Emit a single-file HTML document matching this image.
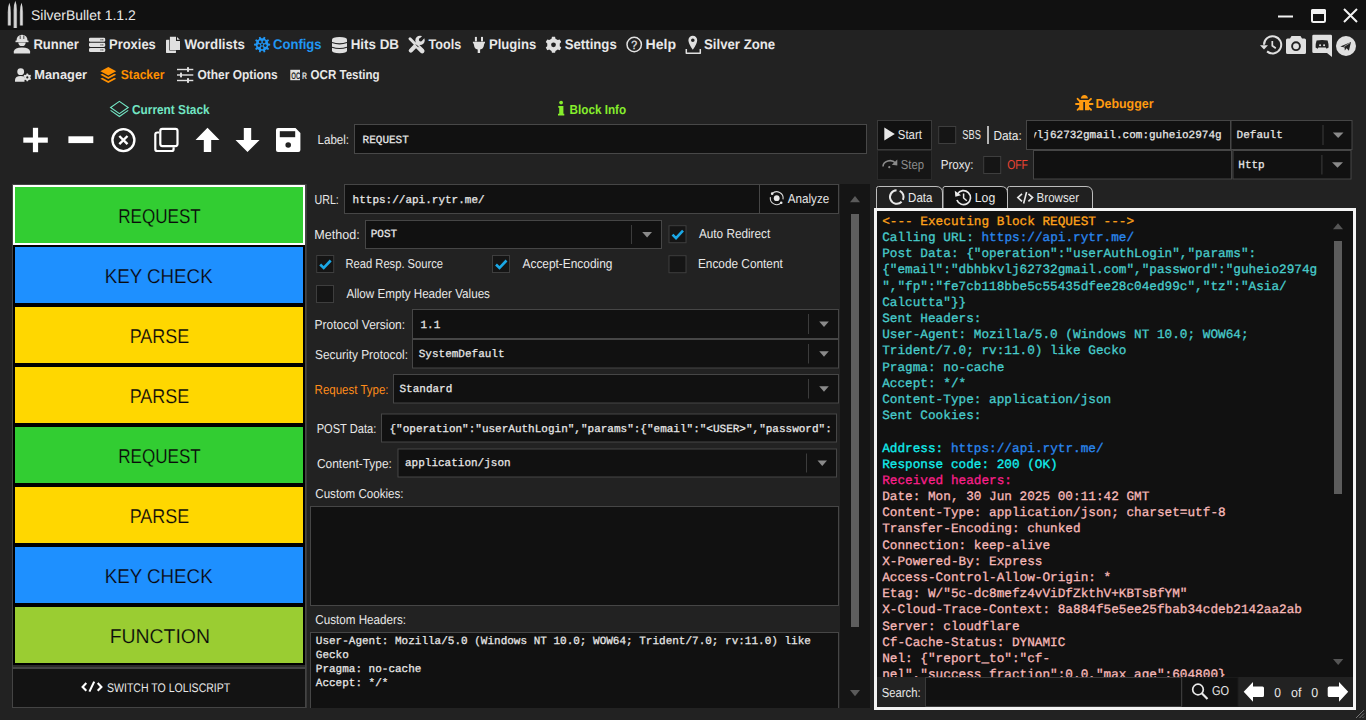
<!DOCTYPE html>
<html><head><meta charset="utf-8"><title>SilverBullet</title>
<style>
html,body{margin:0;padding:0;width:1366px;height:720px;overflow:hidden;background:#222}
svg{position:absolute;left:0;top:0;display:block}
text{text-rendering:geometricPrecision}
</style></head><body>
<svg width="1366" height="720" viewBox="0 0 1366 720">
<rect x="0" y="0" width="1366" height="720" fill="#222222" rx="0" />
<rect x="0" y="0" width="1366" height="30" fill="#111111" rx="0" />
<defs><linearGradient id="bul" x1="0" x2="1" y1="0" y2="0"><stop offset="0" stop-color="#9a9a9a"/><stop offset="0.45" stop-color="#e6e6e6"/><stop offset="1" stop-color="#8a8a8a"/></linearGradient></defs>
<path d="M7.7,25.4 L7.7,12.2 Q7.7,6.7 9.35,2.7 Q11,6.7 11,12.2 L11,25.4 Z" fill="url(#bul)"/>
<path d="M13.5,27.9 L13.5,10.3 Q13.5,4.8 15.3,0.8 Q17.1,4.8 17.1,10.3 L17.1,27.9 Z" fill="url(#bul)"/>
<path d="M19.8,25.4 L19.8,12.2 Q19.8,6.7 21.450000000000003,2.7 Q23.1,6.7 23.1,12.2 L23.1,25.4 Z" fill="url(#bul)"/>
<rect x="1278" y="15.5" width="15" height="2" fill="#f2f2f2" rx="0" />
<rect x="1312" y="10" width="13" height="12" rx="1.5" fill="none" stroke="#f2f2f2" stroke-width="2"/>
<rect x="1311" y="9" width="15" height="5" fill="#f2f2f2" rx="1.5" />
<path d="M1344,9 L1357,22 M1357,9 L1344,22" stroke="#f2f2f2" stroke-width="2" fill="none"/>
<path d="M16.5,41 Q16.5,35 22,34.8 Q27.5,35 27.5,41 Z" fill="#e0e0e0"/>
<rect x="15.5" y="40.6" width="13" height="1.6" fill="#e0e0e0"/>
<path d="M18.3,42.4 Q18.5,46 22,46 Q25.5,46 25.7,42.4 Z" fill="#e0e0e0"/>
<path d="M13.8,53.4 L13.8,51.5 Q14.5,47.6 22,47.6 Q29.5,47.6 30.1,51.5 L30.1,53.4 Z" fill="#e0e0e0"/>
<path d="M20.2,35.5 V39 M23.8,35.5 V39" stroke="#222" stroke-width="0.8"/>
<rect x="89" y="37.7" width="16.2" height="4.1" rx="1.3" fill="#e0e0e0"/>
<rect x="100.5" y="39.0" width="1" height="1.5" fill="#555"/><rect x="102.3" y="39.0" width="1" height="1.5" fill="#555"/>
<rect x="89" y="42.8" width="16.2" height="4.1" rx="1.3" fill="#e0e0e0"/>
<rect x="100.5" y="44.099999999999994" width="1" height="1.5" fill="#555"/><rect x="102.3" y="44.099999999999994" width="1" height="1.5" fill="#555"/>
<rect x="89" y="47.9" width="16.2" height="4.1" rx="1.3" fill="#e0e0e0"/>
<rect x="100.5" y="49.199999999999996" width="1" height="1.5" fill="#555"/><rect x="102.3" y="49.199999999999996" width="1" height="1.5" fill="#555"/>
<rect x="166" y="39.8" width="10" height="13.1" rx="0.6" fill="#e0e0e0"/>
<path d="M169.3,36.1 H176.6 L180.6,40.1 V50.5 H169.3 Z" fill="#222"/>
<path d="M169.9,36.7 H176 V41 H180 V49.9 H169.9 Z" fill="#e0e0e0"/>
<path d="M177,36.9 L179.8,39.8 H177 Z" fill="#e0e0e0"/>
<path d="M268.30,43.50 L270.16,43.82 L270.16,45.38 L268.30,45.70 L267.77,47.35 L269.08,48.71 L268.16,49.97 L266.47,49.14 L265.07,50.16 L265.34,52.03 L263.85,52.51 L262.97,50.84 L261.23,50.84 L260.35,52.51 L258.86,52.03 L259.13,50.16 L257.73,49.14 L256.04,49.97 L255.12,48.71 L256.43,47.35 L255.90,45.70 L254.04,45.38 L254.04,43.82 L255.90,43.50 L256.43,41.85 L255.12,40.49 L256.04,39.23 L257.73,40.06 L259.13,39.04 L258.86,37.17 L260.35,36.69 L261.23,38.36 L262.97,38.36 L263.85,36.69 L265.34,37.17 L265.07,39.04 L266.47,40.06 L268.16,39.23 L269.08,40.49 L267.77,41.85 Z" fill="#2196f3"/>
<circle cx="262.1" cy="44.6" r="4.8" fill="none" stroke="#1d1d1d" stroke-width="0"/>
<circle cx="264.04" cy="41.93" r="1.35" fill="#222"/>
<circle cx="265.24" cy="45.62" r="1.35" fill="#222"/>
<circle cx="262.10" cy="47.90" r="1.35" fill="#222"/>
<circle cx="258.96" cy="45.62" r="1.35" fill="#222"/>
<circle cx="260.16" cy="41.93" r="1.35" fill="#222"/>
<circle cx="262.1" cy="44.6" r="1.1" fill="#222"/>
<path d="M332,39.5 Q332,36.9 339.5,36.9 Q347,36.9 347,39.5 V50.6 Q347,53.2 339.5,53.2 Q332,53.2 332,50.6 Z" fill="#e0e0e0"/>
<path d="M332,42.6 Q339.5,45.2 347,42.6 M332,47.2 Q339.5,49.8 347,47.2" stroke="#222" stroke-width="1.1" fill="none"/>
<path d="M410,38.8 L416.2,45" stroke="#e0e0e0" stroke-width="3" stroke-linecap="round"/>
<path d="M417,45.8 L422.2,51" stroke="#e0e0e0" stroke-width="4.6" stroke-linecap="round"/>
<path d="M410.8,50.6 L417.5,43.8" stroke="#e0e0e0" stroke-width="4.2" stroke-linecap="round"/>
<circle cx="420" cy="40.4" r="4.7" fill="#e0e0e0"/>
<path d="M420.3,40.1 L425.5,34.9" stroke="#222" stroke-width="3.2"/><circle cx="420.6" cy="39.8" r="1.7" fill="#222"/>
<path d="M416,44.6 L418.6,47.2" stroke="#222" stroke-width="1"/>
<rect x="474.9" y="36.9" width="2" height="4.5" fill="#e0e0e0"/><rect x="481" y="36.9" width="2" height="4.5" fill="#e0e0e0"/>
<path d="M472.9,41.7 H485 V43 Q484,43.5 484,45 Q483.5,49 480.1,49.5 V52.9 H477.7 V49.5 Q474.3,49 474,45 Q474,43.5 472.9,43 Z" fill="#e0e0e0"/>
<path d="M559.76,46.13 L561.24,47.50 L559.71,50.16 L557.78,49.56 L555.48,50.89 L555.04,52.85 L551.96,52.85 L551.52,50.89 L549.22,49.56 L547.29,50.16 L545.76,47.50 L547.24,46.13 L547.24,43.47 L545.76,42.10 L547.29,39.44 L549.22,40.04 L551.52,38.71 L551.96,36.75 L555.04,36.75 L555.48,38.71 L557.78,40.04 L559.71,39.44 L561.24,42.10 L559.76,43.47 Z M555.9,44.8 A2.4,2.4 0 1,0 551.1,44.8 A2.4,2.4 0 1,0 555.9,44.8 Z" fill="#e0e0e0" fill-rule="evenodd"/>
<circle cx="634.2" cy="44.5" r="7.2" fill="none" stroke="#e0e0e0" stroke-width="1.5"/>
<path d="M692.8,49.8 Q688.4,43.6 688.4,40.2 A4.4,4.4 0 0,1 697.2,40.2 Q697.2,43.6 692.8,49.8 Z M694.6,40.3 A1.8,1.8 0 1,0 691,40.3 A1.8,1.8 0 1,0 694.6,40.3 Z" fill="#e0e0e0" fill-rule="evenodd"/>
<path d="M686.3,49 V53.3 H700.3 V49" fill="none" stroke="#e0e0e0" stroke-width="1.5" stroke-linejoin="round"/>
<path d="M1264.00,44.80 A8.6,8.6 0 1,1 1267.07,51.39" fill="none" stroke="#e0e0e0" stroke-width="2"/>
<path d="M1260,45.2 L1268,45.2 L1264,49.4 Z" fill="#e0e0e0"/>
<path d="M1272.3,41 V45.7 L1275.8,48.3" fill="none" stroke="#e0e0e0" stroke-width="1.7"/>
<path d="M1286,40 Q1286,38.5 1287.5,38.5 H1290 L1291.5,36 H1300.5 L1302,38.5 H1304.5 Q1306,38.5 1306,40 V52.5 Q1306,54 1304.5,54 H1287.5 Q1286,54 1286,52.5 Z" fill="#e0e0e0"/>
<circle cx="1296" cy="46.2" r="3.9" fill="none" stroke="#222" stroke-width="1.9"/>
<path d="M1312.3,36 Q1312.3,34.7 1313.6,34.7 H1330.7 Q1332,34.7 1332,36 V57 L1327,53 H1313.6 Q1312.3,53 1312.3,51.7 Z" fill="#e0e0e0"/>
<path d="M1316.6,40.6 Q1322.1,39.6 1327.6,40.6 Q1328.8,44 1328.6,47.6 L1326.6,48.8 L1325.8,47.4 H1318.4 L1317.6,48.8 L1315.6,47.6 Q1315.4,44 1316.6,40.6 Z" fill="#222"/>
<circle cx="1320.1" cy="45.3" r="1.05" fill="#e0e0e0"/><circle cx="1324.1" cy="45.3" r="1.05" fill="#e0e0e0"/>
<circle cx="1346" cy="46" r="10" fill="#e0e0e0"/>
<path d="M1340.3,46.4 L1351,42 L1348.9,50.7 L1346.6,48.2 L1344.8,50.4 L1344.6,47.4 Z" fill="#222"/>
<path d="M1343.6,46.9 L1350,42.8" stroke="#e0e0e0" stroke-width="0.6"/>
<circle cx="20.7" cy="71.7" r="3.4" fill="#e0e0e0"/>
<path d="M15,81.8 V80 Q15.2,76 20.7,76 Q23,76 24.5,76.6 L24.5,81.8 Z" fill="#e0e0e0"/>
<path d="M30.33,78.04 L31.08,78.72 L30.33,80.01 L29.37,79.70 L28.26,80.35 L28.05,81.33 L26.55,81.33 L26.34,80.35 L25.23,79.70 L24.27,80.01 L23.52,78.72 L24.27,78.04 L24.27,76.76 L23.52,76.08 L24.27,74.79 L25.23,75.10 L26.34,74.45 L26.55,73.47 L28.05,73.47 L28.26,74.45 L29.37,75.10 L30.33,74.79 L31.08,76.08 L30.33,76.76 Z M28.400000000000002,77.4 A1.1,1.1 0 1,0 26.2,77.4 A1.1,1.1 0 1,0 28.400000000000002,77.4 Z" fill="#e0e0e0" fill-rule="evenodd"/>
<path d="M108.3,67 L116.2,71.2 L108.3,75.4 L100.4,71.2 Z" fill="#ff9000"/>
<path d="M100.4,74.8 L102.3,73.8 L108.3,77 L114.3,73.8 L116.2,74.8 L108.3,79 Z" fill="#ff9000"/>
<path d="M100.4,78.8 L102.3,77.8 L108.3,81 L114.3,77.8 L116.2,78.8 L108.3,83 Z" fill="#ff9000"/>
<rect x="177" y="68.8" width="16.3" height="1.4" fill="#e0e0e0"/>
<rect x="187" y="67.0" width="2" height="5" rx="0.8" fill="#e0e0e0"/>
<rect x="177" y="74.3" width="16.3" height="1.4" fill="#e0e0e0"/>
<rect x="180" y="72.5" width="2" height="5" rx="0.8" fill="#e0e0e0"/>
<rect x="177" y="79.8" width="16.3" height="1.4" fill="#e0e0e0"/>
<rect x="187" y="78.0" width="2" height="5" rx="0.8" fill="#e0e0e0"/>
<rect x="290.3" y="69.8" width="9.7" height="10.4" fill="#e0e0e0"/>
<path d="M119.4,101.4 L128.2,107.5 L119.4,113.6 L110.6,107.5 Z" fill="none" stroke="#72e6c4" stroke-width="1.15"/>
<path d="M110.6,110.4 L119.4,116.5 L128.2,110.4" fill="none" stroke="#72e6c4" stroke-width="1.15"/>
<circle cx="561.1" cy="102.6" r="1.9" fill="#86ee2c"/>
<path d="M558.3,106 H563.4 V113.8 H564.3 V115.6 H558 V113.8 H559.2 V107.7 H558.3 Z" fill="#86ee2c"/>
<path d="M1080.9,98.6 Q1081.2,94.9 1084.4,94.9 Q1087.6,94.9 1087.9,98.6 Z" fill="#ff9a10"/>
<path d="M1079.2,100.1 H1089.1 V110.3 H1085 V102 H1083.3 V110.3 H1079.2 Z" fill="#ff9a10"/>
<path d="M1077.6,98.8 L1080,101.4 M1091,98.8 L1088.4,101.4 M1076,104 H1079.6 M1092.6,104 H1089 M1077.6,109.8 L1080,107.4 M1091,109.8 L1088.4,107.4" stroke="#ff9a10" stroke-width="1.9" fill="none" stroke-linecap="round"/>
<rect x="23.3" y="137.5" width="24.5" height="5.2" fill="#ffffff"/><rect x="32.9" y="127.8" width="5.2" height="24.4" fill="#ffffff"/>
<rect x="68.4" y="136.3" width="24.9" height="6.8" fill="#ffffff"/>
<circle cx="123.4" cy="140.1" r="11" fill="none" stroke="#ffffff" stroke-width="2.4"/>
<path d="M119.3,136 L127.5,144.2 M127.5,136 L119.3,144.2" stroke="#ffffff" stroke-width="2.4"/>
<rect x="160.3" y="128.9" width="17.2" height="17.2" rx="2" fill="none" stroke="#ffffff" stroke-width="2.2"/>
<path d="M159,132.5 H157.4 Q155.3,132.5 155.3,134.6 V148.9 Q155.3,151 157.4,151 H171.5 Q173.6,151 173.6,148.9 V147.2" fill="none" stroke="#ffffff" stroke-width="2.2"/>
<path d="M207.5,127.8 L219.5,140 H211.2 V152 H203.8 V140 H195.5 Z" fill="#ffffff"/>
<path d="M247.5,152 L259.6,140 H251.2 V128 H243.8 V140 H235.5 Z" fill="#ffffff"/>
<path d="M276,130 Q276,128 278,128 H295.5 L300.4,133 V150 Q300.4,152 298.4,152 H278 Q276,152 276,150 Z" fill="#ffffff"/>
<rect x="279.8" y="131.2" width="15.4" height="6" fill="#222"/>
<circle cx="288.2" cy="145" r="2.8" fill="#222"/>
<rect x="354.5" y="124.5" width="512" height="29" fill="#111111" stroke="#484848" stroke-width="1" rx="0" />
<rect x="12.5" y="184.5" width="293" height="483" fill="#2a2a2a" stroke="#444" stroke-width="1"/>
<rect x="13" y="185" width="292" height="60" fill="#ffffff" rx="0" />
<rect x="15" y="187" width="288" height="56" fill="#32cd32" rx="0" />
<rect x="13" y="245" width="292" height="60" fill="#000000" rx="0" />
<rect x="15" y="247" width="288" height="56" fill="#1e90ff" rx="0" />
<rect x="13" y="305" width="292" height="60" fill="#000000" rx="0" />
<rect x="15" y="307" width="288" height="56" fill="#ffd700" rx="0" />
<rect x="13" y="365" width="292" height="60" fill="#000000" rx="0" />
<rect x="15" y="367" width="288" height="56" fill="#ffd700" rx="0" />
<rect x="13" y="425" width="292" height="60" fill="#000000" rx="0" />
<rect x="15" y="427" width="288" height="56" fill="#32cd32" rx="0" />
<rect x="13" y="485" width="292" height="60" fill="#000000" rx="0" />
<rect x="15" y="487" width="288" height="56" fill="#ffd700" rx="0" />
<rect x="13" y="545" width="292" height="60" fill="#000000" rx="0" />
<rect x="15" y="547" width="288" height="56" fill="#1e90ff" rx="0" />
<rect x="13" y="605" width="292" height="60" fill="#000000" rx="0" />
<rect x="15" y="607" width="288" height="56" fill="#9acd32" rx="0" />
<rect x="12.5" y="668.5" width="293" height="39" fill="#131313" stroke="#444" stroke-width="1"/>
<path d="M86.3,683.1 L82.6,686.9 L86.3,690.7 M97.7,683.1 L101.4,686.9 L97.7,690.7 M94.2,681.6 L89.4,691.6" stroke="#ffffff" stroke-width="2.1" fill="none"/>
<rect x="306" y="184" width="1" height="524" fill="#3a3a3a"/>
<rect x="840" y="184" width="30" height="524" fill="#151515" rx="0" />
<path d="M850,202.2 H860 L855,196 Z" fill="#5a5a5a"/>
<rect x="851" y="214" width="8" height="413" fill="#5e5e5e" rx="0" />
<path d="M850,690 H860 L855,696.2 Z" fill="#5a5a5a"/>
<rect x="344.5" y="184.5" width="415" height="29" fill="#111111" stroke="#464646" stroke-width="1"/>
<rect x="759.5" y="184.5" width="79" height="29" fill="#111111" stroke="#464646" stroke-width="1"/>
<path d="M772.17,193.67 A6.4,6.4 0 0,1 783.00,199.31 M781.23,202.73 A6.4,6.4 0 0,1 770.40,197.09" fill="none" stroke="#d8d8d8" stroke-width="1.1"/>
<circle cx="772.17" cy="193.67" r="1.3" fill="#e8e8e8"/><circle cx="781.23" cy="202.73" r="1.3" fill="#e8e8e8"/>
<circle cx="776.7" cy="198.2" r="2.9" fill="#e8e8e8"/>
<rect x="365.5" y="220.5" width="296" height="28" fill="#111111" stroke="#464646" stroke-width="1"/>
<rect x="631" y="225" width="1" height="19" fill="#3c3c3c"/>
<path d="M642.2,231.9 H652 L647.1,237.5 Z" fill="#8a8a8a"/>
<rect x="669.0" y="225.7" width="17" height="17" fill="#151515" stroke="#3e3e3e" stroke-width="1"/>
<path d="M672.5,234.7 L676.0,238.2 L683.0,230.7" stroke="#1ba8e6" stroke-width="2.6" fill="none"/>
<rect x="316.7" y="255.5" width="17" height="17" fill="#151515" stroke="#3e3e3e" stroke-width="1"/>
<path d="M320.2,264.5 L323.7,268 L330.7,260.5" stroke="#1ba8e6" stroke-width="2.6" fill="none"/>
<rect x="492.5" y="255.5" width="17" height="17" fill="#151515" stroke="#3e3e3e" stroke-width="1"/>
<path d="M496,264.5 L499.5,268 L506.5,260.5" stroke="#1ba8e6" stroke-width="2.6" fill="none"/>
<rect x="669.0" y="255.7" width="17" height="17" fill="#151515" stroke="#3e3e3e" stroke-width="1"/>
<rect x="316.5" y="285.5" width="17" height="17" fill="#151515" stroke="#3e3e3e" stroke-width="1"/>
<rect x="412.5" y="309.5" width="426" height="29" fill="#111111" stroke="#464646" stroke-width="1"/>
<rect x="808" y="314" width="1" height="20" fill="#3c3c3c"/>
<path d="M819.2,321.4 H828.8 L824.0,327.0 Z" fill="#8a8a8a"/>
<rect x="412.5" y="339.5" width="426" height="28.5" fill="#111111" stroke="#464646" stroke-width="1"/>
<rect x="808" y="344" width="1" height="19.5" fill="#3c3c3c"/>
<path d="M819.2,351.15 H828.8 L824.0,356.75 Z" fill="#8a8a8a"/>
<rect x="393.5" y="374.5" width="445" height="28.5" fill="#111111" stroke="#464646" stroke-width="1"/>
<rect x="808" y="379" width="1" height="19.5" fill="#3c3c3c"/>
<path d="M819.2,386.15 H828.8 L824.0,391.75 Z" fill="#8a8a8a"/>
<rect x="381.5" y="414.0" width="455" height="28.0" fill="#111111" stroke="#464646" stroke-width="1"/>
<clipPath id="cpd"><rect x="382" y="414" width="449.5" height="28"/></clipPath>
<g clip-path="url(#cpd)"><text x="389.5" y="432" font-family="Liberation Mono" font-size="11" fill="#e8e8e8" stroke="#e8e8e8" stroke-width="0.25" xml:space="preserve">{"operation":"userAuthLogin","params":{"email":"&lt;USER&gt;","password":"&lt;PASS&gt;"}}</text></g>
<rect x="398.0" y="449.0" width="438.5" height="28.0" fill="#111111" stroke="#464646" stroke-width="1"/>
<rect x="806" y="453.5" width="1" height="19.0" fill="#3c3c3c"/>
<path d="M817.5,460.4 H827 L822.25,466.0 Z" fill="#8a8a8a"/>
<rect x="310.5" y="506.5" width="528" height="99" fill="#111111" stroke="#464646" stroke-width="1"/>
<rect x="310.5" y="632.5" width="528" height="87" fill="#111111" stroke="#464646" stroke-width="1"/>
<rect x="877.5" y="120.5" width="54" height="29" fill="#111111" stroke="#3a3a3a" stroke-width="1"/>
<path d="M884.3,127.4 L894.8,134 L884.3,140.5 Z" fill="#e8e8e8"/>
<rect x="877.5" y="150.5" width="54" height="29" fill="#161616" stroke="#2a2a2a" stroke-width="1"/>
<path d="M883,166.5 A7,6 0 0,1 895.5,163" fill="none" stroke="#8a8a8a" stroke-width="1.6"/>
<path d="M897.3,159.5 L897.3,165.5 L891.8,164.8 Z" fill="#8a8a8a"/><circle cx="889.3" cy="167.2" r="1.1" fill="#8a8a8a"/>
<rect x="938.7" y="126.5" width="17" height="17" fill="#151515" stroke="#3e3e3e" stroke-width="1"/>
<rect x="987" y="126" width="2" height="18" fill="#b4b4b4" rx="0" />
<rect x="1026.5" y="120.5" width="204" height="29" fill="#111111" stroke="#464646" stroke-width="1"/>
<clipPath id="cdata"><rect x="1034.3" y="121" width="196" height="28"/></clipPath>
<g clip-path="url(#cdata)"><text x="1221.6" y="138.3" text-anchor="end" font-family="Liberation Mono" font-size="11" fill="#e8e8e8" stroke="#e8e8e8" stroke-width="0.25" xml:space="preserve">dbhbkvlj62732gmail.com:guheio2974g</text></g>
<rect x="1231.0" y="120.5" width="121.0" height="29" fill="#111111" stroke="#464646" stroke-width="1"/>
<rect x="1322.5" y="125" width="1" height="20" fill="#3c3c3c"/>
<path d="M1332.8,132.4 H1343.5 L1338.15,138.0 Z" fill="#8a8a8a"/>
<rect x="983.7" y="156.5" width="17" height="17" fill="#151515" stroke="#3e3e3e" stroke-width="1"/>
<rect x="1033.5" y="150.5" width="198" height="28.5" fill="#111111" stroke="#464646" stroke-width="1"/>
<rect x="1233.0" y="150.5" width="118.0" height="28.5" fill="#111111" stroke="#464646" stroke-width="1"/>
<rect x="1321.4" y="155" width="1" height="19.5" fill="#3c3c3c"/>
<path d="M1332,162.15 H1343 L1337.5,167.75 Z" fill="#8a8a8a"/>
<path d="M876.5,209.5 V188.5 Q876.5,186.5 878.5,186.5 H936 Q942.5,186.5 942.5,193.0 V209.5" fill="#202020" stroke="#bdbdbd" stroke-width="1"/>
<path d="M1007.5,209.5 V188.5 Q1007.5,186.5 1009.5,186.5 H1086 Q1092.5,186.5 1092.5,193.0 V209.5" fill="#202020" stroke="#bdbdbd" stroke-width="1"/>
<path d="M943.0,209.5 V188.5 Q943.0,186.5 945.0,186.5 H1001 Q1007.5,186.5 1007.5,193.0 V209.5" fill="#111111" stroke="#bdbdbd" stroke-width="1"/>
<path d="M899.67,190.84 A6.8,6.8 0 0,1 902.96,199.87 M901.61,201.81 A6.8,6.8 0 1,1 896.56,190.20" fill="none" stroke="#e8e8e8" stroke-width="2"/>
<path d="M957.44,194.10 A7,7 0 1,1 956.92,199.99" fill="none" stroke="#e8e8e8" stroke-width="1.7"/>
<path d="M954.8,190.8 L955.3,196.8 L961,195.2 Z" fill="#e8e8e8"/>
<path d="M963.6,193.6 V198 L966.8,200.8" fill="none" stroke="#e8e8e8" stroke-width="1.5"/>
<path d="M1022,193.8 L1017.8,197.6 L1022,201.4 M1028.4,193.8 L1032.6,197.6 L1028.4,201.4 M1026.6,192 L1023.6,203.5" fill="none" stroke="#e8e8e8" stroke-width="1.6"/>
<rect x="875.5" y="209.5" width="479" height="499" fill="#111111" stroke="#f4f4f4" stroke-width="3"/>
<path d="M1333,229.2 H1343 L1338,223.3 Z" fill="#555"/>
<rect x="1334" y="241" width="8" height="253" fill="#5c5c5c" rx="0" />
<path d="M1333,659 H1343.3 L1338.2,665 Z" fill="#555"/>
<clipPath id="clog"><rect x="878" y="211" width="474" height="466"/></clipPath>
<g clip-path="url(#clog)">
<text x="882.20" y="224.85" font-family="Liberation Mono" font-size="12.73" fill="#ffa31a" stroke="#ffa31a" stroke-width="0.3" xml:space="preserve">&lt;--- Executing Block REQUEST ---&gt;</text>
<text x="882.20" y="241.04" font-family="Liberation Mono" font-size="12.73" fill="#48cccc" stroke="#48cccc" stroke-width="0.3" xml:space="preserve">Calling URL: </text>
<text x="981.49" y="241.04" font-family="Liberation Mono" font-size="12.73" fill="#2a88f0" stroke="#2a88f0" stroke-width="0.3" xml:space="preserve">https://api.rytr.me/</text>
<text x="882.20" y="257.23" font-family="Liberation Mono" font-size="12.73" fill="#48cccc" stroke="#48cccc" stroke-width="0.3" xml:space="preserve">Post Data: {&quot;operation&quot;:&quot;userAuthLogin&quot;,&quot;params&quot;:</text>
<text x="882.20" y="273.42" font-family="Liberation Mono" font-size="12.73" fill="#48cccc" stroke="#48cccc" stroke-width="0.3" xml:space="preserve">{&quot;email&quot;:&quot;dbhbkvlj62732gmail.com&quot;,&quot;password&quot;:&quot;guheio2974g</text>
<text x="882.20" y="289.61" font-family="Liberation Mono" font-size="12.73" fill="#48cccc" stroke="#48cccc" stroke-width="0.3" xml:space="preserve">&quot;,&quot;fp&quot;:&quot;fe7cb118bbe5c55435dfee28c04ed99c&quot;,&quot;tz&quot;:&quot;Asia/</text>
<text x="882.20" y="305.80" font-family="Liberation Mono" font-size="12.73" fill="#48cccc" stroke="#48cccc" stroke-width="0.3" xml:space="preserve">Calcutta&quot;}}</text>
<text x="882.20" y="321.99" font-family="Liberation Mono" font-size="12.73" fill="#48cccc" stroke="#48cccc" stroke-width="0.3" xml:space="preserve">Sent Headers:</text>
<text x="882.20" y="338.18" font-family="Liberation Mono" font-size="12.73" fill="#48cccc" stroke="#48cccc" stroke-width="0.3" xml:space="preserve">User-Agent: Mozilla/5.0 (Windows NT 10.0; WOW64;</text>
<text x="882.20" y="354.37" font-family="Liberation Mono" font-size="12.73" fill="#48cccc" stroke="#48cccc" stroke-width="0.3" xml:space="preserve">Trident/7.0; rv:11.0) like Gecko</text>
<text x="882.20" y="370.56" font-family="Liberation Mono" font-size="12.73" fill="#48cccc" stroke="#48cccc" stroke-width="0.3" xml:space="preserve">Pragma: no-cache</text>
<text x="882.20" y="386.75" font-family="Liberation Mono" font-size="12.73" fill="#48cccc" stroke="#48cccc" stroke-width="0.3" xml:space="preserve">Accept: */*</text>
<text x="882.20" y="402.94" font-family="Liberation Mono" font-size="12.73" fill="#48cccc" stroke="#48cccc" stroke-width="0.3" xml:space="preserve">Content-Type: application/json</text>
<text x="882.20" y="419.13" font-family="Liberation Mono" font-size="12.73" fill="#48cccc" stroke="#48cccc" stroke-width="0.3" xml:space="preserve">Sent Cookies:</text>
<text x="882.20" y="451.51" font-family="Liberation Mono" font-size="12.73" fill="#12eeee" stroke="#12eeee" stroke-width="0.3" xml:space="preserve">Address: </text>
<text x="950.94" y="451.51" font-family="Liberation Mono" font-size="12.73" fill="#2a88f0" stroke="#2a88f0" stroke-width="0.3" xml:space="preserve">https://api.rytr.me/</text>
<text x="882.20" y="467.70" font-family="Liberation Mono" font-size="12.73" fill="#12eeee" stroke="#12eeee" stroke-width="0.3" xml:space="preserve">Response code: 200 (OK)</text>
<text x="882.20" y="483.89" font-family="Liberation Mono" font-size="12.73" fill="#fa1f8a" stroke="#fa1f8a" stroke-width="0.3" xml:space="preserve">Received headers:</text>
<text x="882.20" y="500.08" font-family="Liberation Mono" font-size="12.73" fill="#f7b9b9" stroke="#f7b9b9" stroke-width="0.3" xml:space="preserve">Date: Mon, 30 Jun 2025 00:11:42 GMT</text>
<text x="882.20" y="516.27" font-family="Liberation Mono" font-size="12.73" fill="#f7b9b9" stroke="#f7b9b9" stroke-width="0.3" xml:space="preserve">Content-Type: application/json; charset=utf-8</text>
<text x="882.20" y="532.46" font-family="Liberation Mono" font-size="12.73" fill="#f7b9b9" stroke="#f7b9b9" stroke-width="0.3" xml:space="preserve">Transfer-Encoding: chunked</text>
<text x="882.20" y="548.65" font-family="Liberation Mono" font-size="12.73" fill="#f7b9b9" stroke="#f7b9b9" stroke-width="0.3" xml:space="preserve">Connection: keep-alive</text>
<text x="882.20" y="564.84" font-family="Liberation Mono" font-size="12.73" fill="#f7b9b9" stroke="#f7b9b9" stroke-width="0.3" xml:space="preserve">X-Powered-By: Express</text>
<text x="882.20" y="581.03" font-family="Liberation Mono" font-size="12.73" fill="#f7b9b9" stroke="#f7b9b9" stroke-width="0.3" xml:space="preserve">Access-Control-Allow-Origin: *</text>
<text x="882.20" y="597.22" font-family="Liberation Mono" font-size="12.73" fill="#f7b9b9" stroke="#f7b9b9" stroke-width="0.3" xml:space="preserve">Etag: W/&quot;5c-dc8mefz4vViDfZkthV+KBTsBfYM&quot;</text>
<text x="882.20" y="613.41" font-family="Liberation Mono" font-size="12.73" fill="#f7b9b9" stroke="#f7b9b9" stroke-width="0.3" xml:space="preserve">X-Cloud-Trace-Context: 8a884f5e5ee25fbab34cdeb2142aa2ab</text>
<text x="882.20" y="629.60" font-family="Liberation Mono" font-size="12.73" fill="#f7b9b9" stroke="#f7b9b9" stroke-width="0.3" xml:space="preserve">Server: cloudflare</text>
<text x="882.20" y="645.79" font-family="Liberation Mono" font-size="12.73" fill="#f7b9b9" stroke="#f7b9b9" stroke-width="0.3" xml:space="preserve">Cf-Cache-Status: DYNAMIC</text>
<text x="882.20" y="661.98" font-family="Liberation Mono" font-size="12.73" fill="#f7b9b9" stroke="#f7b9b9" stroke-width="0.3" xml:space="preserve">Nel: {&quot;report_to&quot;:&quot;cf-</text>
<text x="882.20" y="678.17" font-family="Liberation Mono" font-size="12.73" fill="#f7b9b9" stroke="#f7b9b9" stroke-width="0.3" xml:space="preserve">nel&quot;,&quot;success_fraction&quot;:0.0,&quot;max_age&quot;:604800}</text>
</g>
<rect x="877" y="677" width="476" height="30" fill="#222222" rx="0" />
<rect x="925.5" y="677.5" width="256" height="29" fill="#111111" stroke="#3a3a3a" stroke-width="1"/>
<rect x="1182.5" y="677.5" width="55.5" height="29" fill="#111111" stroke="#1a1a1a" stroke-width="1"/>
<circle cx="1198" cy="689.5" r="5.3" fill="none" stroke="#e8e8e8" stroke-width="1.7"/>
<path d="M1201.8,693.3 L1207.5,699" stroke="#e8e8e8" stroke-width="2.2"/>
<path d="M1243.7,691.8 L1253,682 V686.5 H1262.5 Q1264,686.5 1264,688 V695.5 Q1264,697 1262.5,697 H1253 V701.7 Z" fill="#ffffff"/>
<path d="M1348.2,691.8 L1339,682 V686.5 H1329.2 Q1327.7,686.5 1327.7,688 V695.5 Q1327.7,697 1329.2,697 H1339 V701.7 Z" fill="#ffffff"/>
<path d="M1356,718 L1364,710 M1359.5,718 L1364,713.5 M1362.5,718 L1364,716.5" stroke="#777" stroke-width="1"/>
<text x="31.00" y="19.5" font-family="Liberation Sans" font-size="14" fill="#e8e8e8" textLength="104.79" lengthAdjust="spacingAndGlyphs" xml:space="preserve">SilverBullet 1.1.2</text>
<text x="33.40" y="49" font-family="Liberation Sans" font-size="14" fill="#e8e8e8" font-weight="bold" textLength="45.49" lengthAdjust="spacingAndGlyphs" xml:space="preserve">Runner</text>
<text x="109.00" y="49" font-family="Liberation Sans" font-size="14" fill="#e8e8e8" font-weight="bold" textLength="46.80" lengthAdjust="spacingAndGlyphs" xml:space="preserve">Proxies</text>
<text x="184.40" y="49" font-family="Liberation Sans" font-size="14" fill="#e8e8e8" font-weight="bold" textLength="60.40" lengthAdjust="spacingAndGlyphs" xml:space="preserve">Wordlists</text>
<text x="273.00" y="49" font-family="Liberation Sans" font-size="14" fill="#2196f3" font-weight="bold" textLength="48.60" lengthAdjust="spacingAndGlyphs" xml:space="preserve">Configs</text>
<text x="350.70" y="49" font-family="Liberation Sans" font-size="14" fill="#e8e8e8" font-weight="bold" textLength="48.31" lengthAdjust="spacingAndGlyphs" xml:space="preserve">Hits DB</text>
<text x="428.50" y="49" font-family="Liberation Sans" font-size="14" fill="#e8e8e8" font-weight="bold" textLength="32.71" lengthAdjust="spacingAndGlyphs" xml:space="preserve">Tools</text>
<text x="489.00" y="49" font-family="Liberation Sans" font-size="14" fill="#e8e8e8" font-weight="bold" textLength="47.30" lengthAdjust="spacingAndGlyphs" xml:space="preserve">Plugins</text>
<text x="564.70" y="49" font-family="Liberation Sans" font-size="14" fill="#e8e8e8" font-weight="bold" textLength="52.10" lengthAdjust="spacingAndGlyphs" xml:space="preserve">Settings</text>
<text x="645.50" y="49" font-family="Liberation Sans" font-size="14" fill="#e8e8e8" font-weight="bold" textLength="30.56" lengthAdjust="spacingAndGlyphs" xml:space="preserve">Help</text>
<text x="704.00" y="49" font-family="Liberation Sans" font-size="14" fill="#e8e8e8" font-weight="bold" textLength="71.20" lengthAdjust="spacingAndGlyphs" xml:space="preserve">Silver Zone</text>
<text x="631.20" y="49.3" font-family="Liberation Sans" font-size="12" fill="#e0e0e0" stroke="#e0e0e0" stroke-width="0.3" textLength="5.91" lengthAdjust="spacingAndGlyphs" xml:space="preserve">?</text>
<text x="34.30" y="78.9" font-family="Liberation Sans" font-size="13" fill="#e8e8e8" font-weight="bold" textLength="52.76" lengthAdjust="spacingAndGlyphs" xml:space="preserve">Manager</text>
<text x="120.80" y="78.9" font-family="Liberation Sans" font-size="13" fill="#ff9000" font-weight="bold" textLength="43.76" lengthAdjust="spacingAndGlyphs" xml:space="preserve">Stacker</text>
<text x="197.50" y="78.9" font-family="Liberation Sans" font-size="13" fill="#e8e8e8" font-weight="bold" textLength="80.21" lengthAdjust="spacingAndGlyphs" xml:space="preserve">Other Options</text>
<text x="310.60" y="78.9" font-family="Liberation Sans" font-size="13" fill="#e8e8e8" font-weight="bold" textLength="69.05" lengthAdjust="spacingAndGlyphs" xml:space="preserve">OCR Testing</text>
<text x="291.20" y="79.1" font-family="Liberation Sans" font-size="9.5" fill="#2a2a2a" font-weight="bold" textLength="9.11" lengthAdjust="spacingAndGlyphs" xml:space="preserve">OC</text>
<text x="301.90" y="79" font-family="Liberation Sans" font-size="9.5" fill="#e0e0e0" font-weight="bold" textLength="4.90" lengthAdjust="spacingAndGlyphs" xml:space="preserve">R</text>
<text x="132.00" y="113.9" font-family="Liberation Sans" font-size="13" fill="#72e6c4" font-weight="bold" textLength="77.60" lengthAdjust="spacingAndGlyphs" xml:space="preserve">Current Stack</text>
<text x="569.50" y="114.2" font-family="Liberation Sans" font-size="13" fill="#86ee2c" font-weight="bold" textLength="56.65" lengthAdjust="spacingAndGlyphs" xml:space="preserve">Block Info</text>
<text x="1095.50" y="108.2" font-family="Liberation Sans" font-size="13" fill="#ff9a10" font-weight="bold" textLength="58.06" lengthAdjust="spacingAndGlyphs" xml:space="preserve">Debugger</text>
<text x="317.51" y="144" font-family="Liberation Sans" font-size="13" fill="#e8e8e8" textLength="31.54" lengthAdjust="spacingAndGlyphs" xml:space="preserve">Label:</text>
<text x="362.60" y="143" font-family="Liberation Mono" font-size="11" fill="#e8e8e8" stroke="#e8e8e8" stroke-width="0.25" xml:space="preserve">REQUEST</text>
<text x="118.25" y="222.8" font-family="Liberation Sans" font-size="20" fill="#0a0a0a" stroke="#32cd32" stroke-width="0.2" textLength="82.54" lengthAdjust="spacingAndGlyphs" xml:space="preserve">REQUEST</text>
<text x="104.67" y="282.8" font-family="Liberation Sans" font-size="20" fill="#0a0a0a" stroke="#1e90ff" stroke-width="0.2" textLength="108.02" lengthAdjust="spacingAndGlyphs" xml:space="preserve">KEY CHECK</text>
<text x="129.70" y="342.8" font-family="Liberation Sans" font-size="20" fill="#0a0a0a" stroke="#ffd700" stroke-width="0.2" textLength="59.50" lengthAdjust="spacingAndGlyphs" xml:space="preserve">PARSE</text>
<text x="129.70" y="402.8" font-family="Liberation Sans" font-size="20" fill="#0a0a0a" stroke="#ffd700" stroke-width="0.2" textLength="59.50" lengthAdjust="spacingAndGlyphs" xml:space="preserve">PARSE</text>
<text x="118.25" y="462.8" font-family="Liberation Sans" font-size="20" fill="#0a0a0a" stroke="#32cd32" stroke-width="0.2" textLength="82.54" lengthAdjust="spacingAndGlyphs" xml:space="preserve">REQUEST</text>
<text x="129.70" y="522.8" font-family="Liberation Sans" font-size="20" fill="#0a0a0a" stroke="#ffd700" stroke-width="0.2" textLength="59.50" lengthAdjust="spacingAndGlyphs" xml:space="preserve">PARSE</text>
<text x="104.67" y="582.8" font-family="Liberation Sans" font-size="20" fill="#0a0a0a" stroke="#1e90ff" stroke-width="0.2" textLength="108.02" lengthAdjust="spacingAndGlyphs" xml:space="preserve">KEY CHECK</text>
<text x="109.63" y="642.8" font-family="Liberation Sans" font-size="20" fill="#0a0a0a" stroke="#9acd32" stroke-width="0.2" textLength="100.37" lengthAdjust="spacingAndGlyphs" xml:space="preserve">FUNCTION</text>
<text x="107.00" y="692" font-family="Liberation Sans" font-size="12.5" fill="#e8e8e8" textLength="123.29" lengthAdjust="spacingAndGlyphs" xml:space="preserve">SWITCH TO LOLISCRIPT</text>
<text x="314.48" y="203.6" font-family="Liberation Sans" font-size="13" fill="#e8e8e8" textLength="24.32" lengthAdjust="spacingAndGlyphs" xml:space="preserve">URL:</text>
<text x="352.60" y="203.2" font-family="Liberation Mono" font-size="11" fill="#e8e8e8" stroke="#e8e8e8" stroke-width="0.25" xml:space="preserve">https://api.rytr.me/</text>
<text x="787.80" y="203" font-family="Liberation Sans" font-size="13" fill="#e8e8e8" textLength="41.41" lengthAdjust="spacingAndGlyphs" xml:space="preserve">Analyze</text>
<text x="314.33" y="239.2" font-family="Liberation Sans" font-size="13" fill="#e8e8e8" textLength="45.36" lengthAdjust="spacingAndGlyphs" xml:space="preserve">Method:</text>
<text x="370.70" y="237.4" font-family="Liberation Mono" font-size="11" fill="#e8e8e8" stroke="#e8e8e8" stroke-width="0.25" xml:space="preserve">POST</text>
<text x="698.90" y="238.1" font-family="Liberation Sans" font-size="13" fill="#e8e8e8" textLength="71.35" lengthAdjust="spacingAndGlyphs" xml:space="preserve">Auto Redirect</text>
<text x="345.54" y="268" font-family="Liberation Sans" font-size="13" fill="#e8e8e8" textLength="97.46" lengthAdjust="spacingAndGlyphs" xml:space="preserve">Read Resp. Source</text>
<text x="522.50" y="268" font-family="Liberation Sans" font-size="13" fill="#e8e8e8" textLength="89.91" lengthAdjust="spacingAndGlyphs" xml:space="preserve">Accept-Encoding</text>
<text x="697.99" y="268" font-family="Liberation Sans" font-size="13" fill="#e8e8e8" textLength="84.76" lengthAdjust="spacingAndGlyphs" xml:space="preserve">Encode Content</text>
<text x="346.40" y="297.5" font-family="Liberation Sans" font-size="13" fill="#e8e8e8" textLength="143.55" lengthAdjust="spacingAndGlyphs" xml:space="preserve">Allow Empty Header Values</text>
<text x="314.58" y="329.3" font-family="Liberation Sans" font-size="13" fill="#e8e8e8" textLength="90.48" lengthAdjust="spacingAndGlyphs" xml:space="preserve">Protocol Version:</text>
<text x="420.50" y="328" font-family="Liberation Mono" font-size="11" fill="#e8e8e8" stroke="#e8e8e8" stroke-width="0.25" xml:space="preserve">1.1</text>
<text x="315.00" y="359.3" font-family="Liberation Sans" font-size="13" fill="#e8e8e8" textLength="93.06" lengthAdjust="spacingAndGlyphs" xml:space="preserve">Security Protocol:</text>
<text x="418.75" y="357" font-family="Liberation Mono" font-size="11" fill="#e8e8e8" stroke="#e8e8e8" stroke-width="0.25" xml:space="preserve">SystemDefault</text>
<text x="314.62" y="393.8" font-family="Liberation Sans" font-size="13" fill="#ff8c1a" textLength="73.92" lengthAdjust="spacingAndGlyphs" xml:space="preserve">Request Type:</text>
<text x="399.50" y="392" font-family="Liberation Mono" font-size="11" fill="#e8e8e8" stroke="#e8e8e8" stroke-width="0.25" xml:space="preserve">Standard</text>
<text x="316.65" y="432.5" font-family="Liberation Sans" font-size="13" fill="#e8e8e8" textLength="59.67" lengthAdjust="spacingAndGlyphs" xml:space="preserve">POST Data:</text>
<text x="317.00" y="467.5" font-family="Liberation Sans" font-size="13" fill="#e8e8e8" textLength="74.86" lengthAdjust="spacingAndGlyphs" xml:space="preserve">Content-Type:</text>
<text x="405.00" y="466.3" font-family="Liberation Mono" font-size="11" fill="#e8e8e8" stroke="#e8e8e8" stroke-width="0.25" xml:space="preserve">application/json</text>
<text x="315.30" y="498.1" font-family="Liberation Sans" font-size="13" fill="#e8e8e8" textLength="88.25" lengthAdjust="spacingAndGlyphs" xml:space="preserve">Custom Cookies:</text>
<text x="315.30" y="624" font-family="Liberation Sans" font-size="13" fill="#e8e8e8" textLength="90.65" lengthAdjust="spacingAndGlyphs" xml:space="preserve">Custom Headers:</text>
<text x="315.80" y="644" font-family="Liberation Mono" font-size="11" fill="#e8e8e8" stroke="#e8e8e8" stroke-width="0.25" xml:space="preserve">User-Agent: Mozilla/5.0 (Windows NT 10.0; WOW64; Trident/7.0; rv:11.0) like</text>
<text x="315.80" y="658" font-family="Liberation Mono" font-size="11" fill="#e8e8e8" stroke="#e8e8e8" stroke-width="0.25" xml:space="preserve">Gecko</text>
<text x="315.80" y="672" font-family="Liberation Mono" font-size="11" fill="#e8e8e8" stroke="#e8e8e8" stroke-width="0.25" xml:space="preserve">Pragma: no-cache</text>
<text x="315.80" y="686" font-family="Liberation Mono" font-size="11" fill="#e8e8e8" stroke="#e8e8e8" stroke-width="0.25" xml:space="preserve">Accept: */*</text>
<text x="897.80" y="139.2" font-family="Liberation Sans" font-size="13" fill="#e8e8e8" textLength="24.06" lengthAdjust="spacingAndGlyphs" xml:space="preserve">Start</text>
<text x="900.80" y="169" font-family="Liberation Sans" font-size="13" fill="#8c8c8c" textLength="23.30" lengthAdjust="spacingAndGlyphs" xml:space="preserve">Step</text>
<text x="962.30" y="138.8" font-family="Liberation Sans" font-size="13" fill="#e8e8e8" textLength="18.57" lengthAdjust="spacingAndGlyphs" xml:space="preserve">SBS</text>
<text x="993.39" y="139.7" font-family="Liberation Sans" font-size="13" fill="#e8e8e8" textLength="28.37" lengthAdjust="spacingAndGlyphs" xml:space="preserve">Data:</text>
<text x="1236.60" y="137.9" font-family="Liberation Mono" font-size="11" fill="#e8e8e8" stroke="#e8e8e8" stroke-width="0.25" xml:space="preserve">Default</text>
<text x="940.71" y="168.8" font-family="Liberation Sans" font-size="13" fill="#e8e8e8" textLength="32.84" lengthAdjust="spacingAndGlyphs" xml:space="preserve">Proxy:</text>
<text x="1007.20" y="168.8" font-family="Liberation Sans" font-size="13" fill="#ee4433" textLength="20.75" lengthAdjust="spacingAndGlyphs" xml:space="preserve">OFF</text>
<text x="1238.30" y="167.6" font-family="Liberation Mono" font-size="11" fill="#e8e8e8" stroke="#e8e8e8" stroke-width="0.25" xml:space="preserve">Http</text>
<text x="908.11" y="201.9" font-family="Liberation Sans" font-size="13" fill="#e8e8e8" textLength="24.30" lengthAdjust="spacingAndGlyphs" xml:space="preserve">Data</text>
<text x="974.76" y="202" font-family="Liberation Sans" font-size="13" fill="#e8e8e8" textLength="20.46" lengthAdjust="spacingAndGlyphs" xml:space="preserve">Log</text>
<text x="1036.61" y="202" font-family="Liberation Sans" font-size="13" fill="#e8e8e8" textLength="42.39" lengthAdjust="spacingAndGlyphs" xml:space="preserve">Browser</text>
<text x="881.80" y="696.9" font-family="Liberation Sans" font-size="13" fill="#e8e8e8" textLength="38.73" lengthAdjust="spacingAndGlyphs" xml:space="preserve">Search:</text>
<text x="1212.00" y="695.4" font-family="Liberation Sans" font-size="13" fill="#e8e8e8" textLength="17.09" lengthAdjust="spacingAndGlyphs" xml:space="preserve">GO</text>
<text x="1274.20" y="697" font-family="Liberation Sans" font-size="13" fill="#e8e8e8" textLength="6.71" lengthAdjust="spacingAndGlyphs" xml:space="preserve">0</text>
<text x="1291.00" y="697" font-family="Liberation Sans" font-size="13" fill="#e8e8e8" textLength="10.43" lengthAdjust="spacingAndGlyphs" xml:space="preserve">of</text>
<text x="1311.30" y="697" font-family="Liberation Sans" font-size="13" fill="#e8e8e8" textLength="6.92" lengthAdjust="spacingAndGlyphs" xml:space="preserve">0</text>
<rect x="306" y="708" width="564" height="12" fill="#222222"/>

</svg>
</body></html>
